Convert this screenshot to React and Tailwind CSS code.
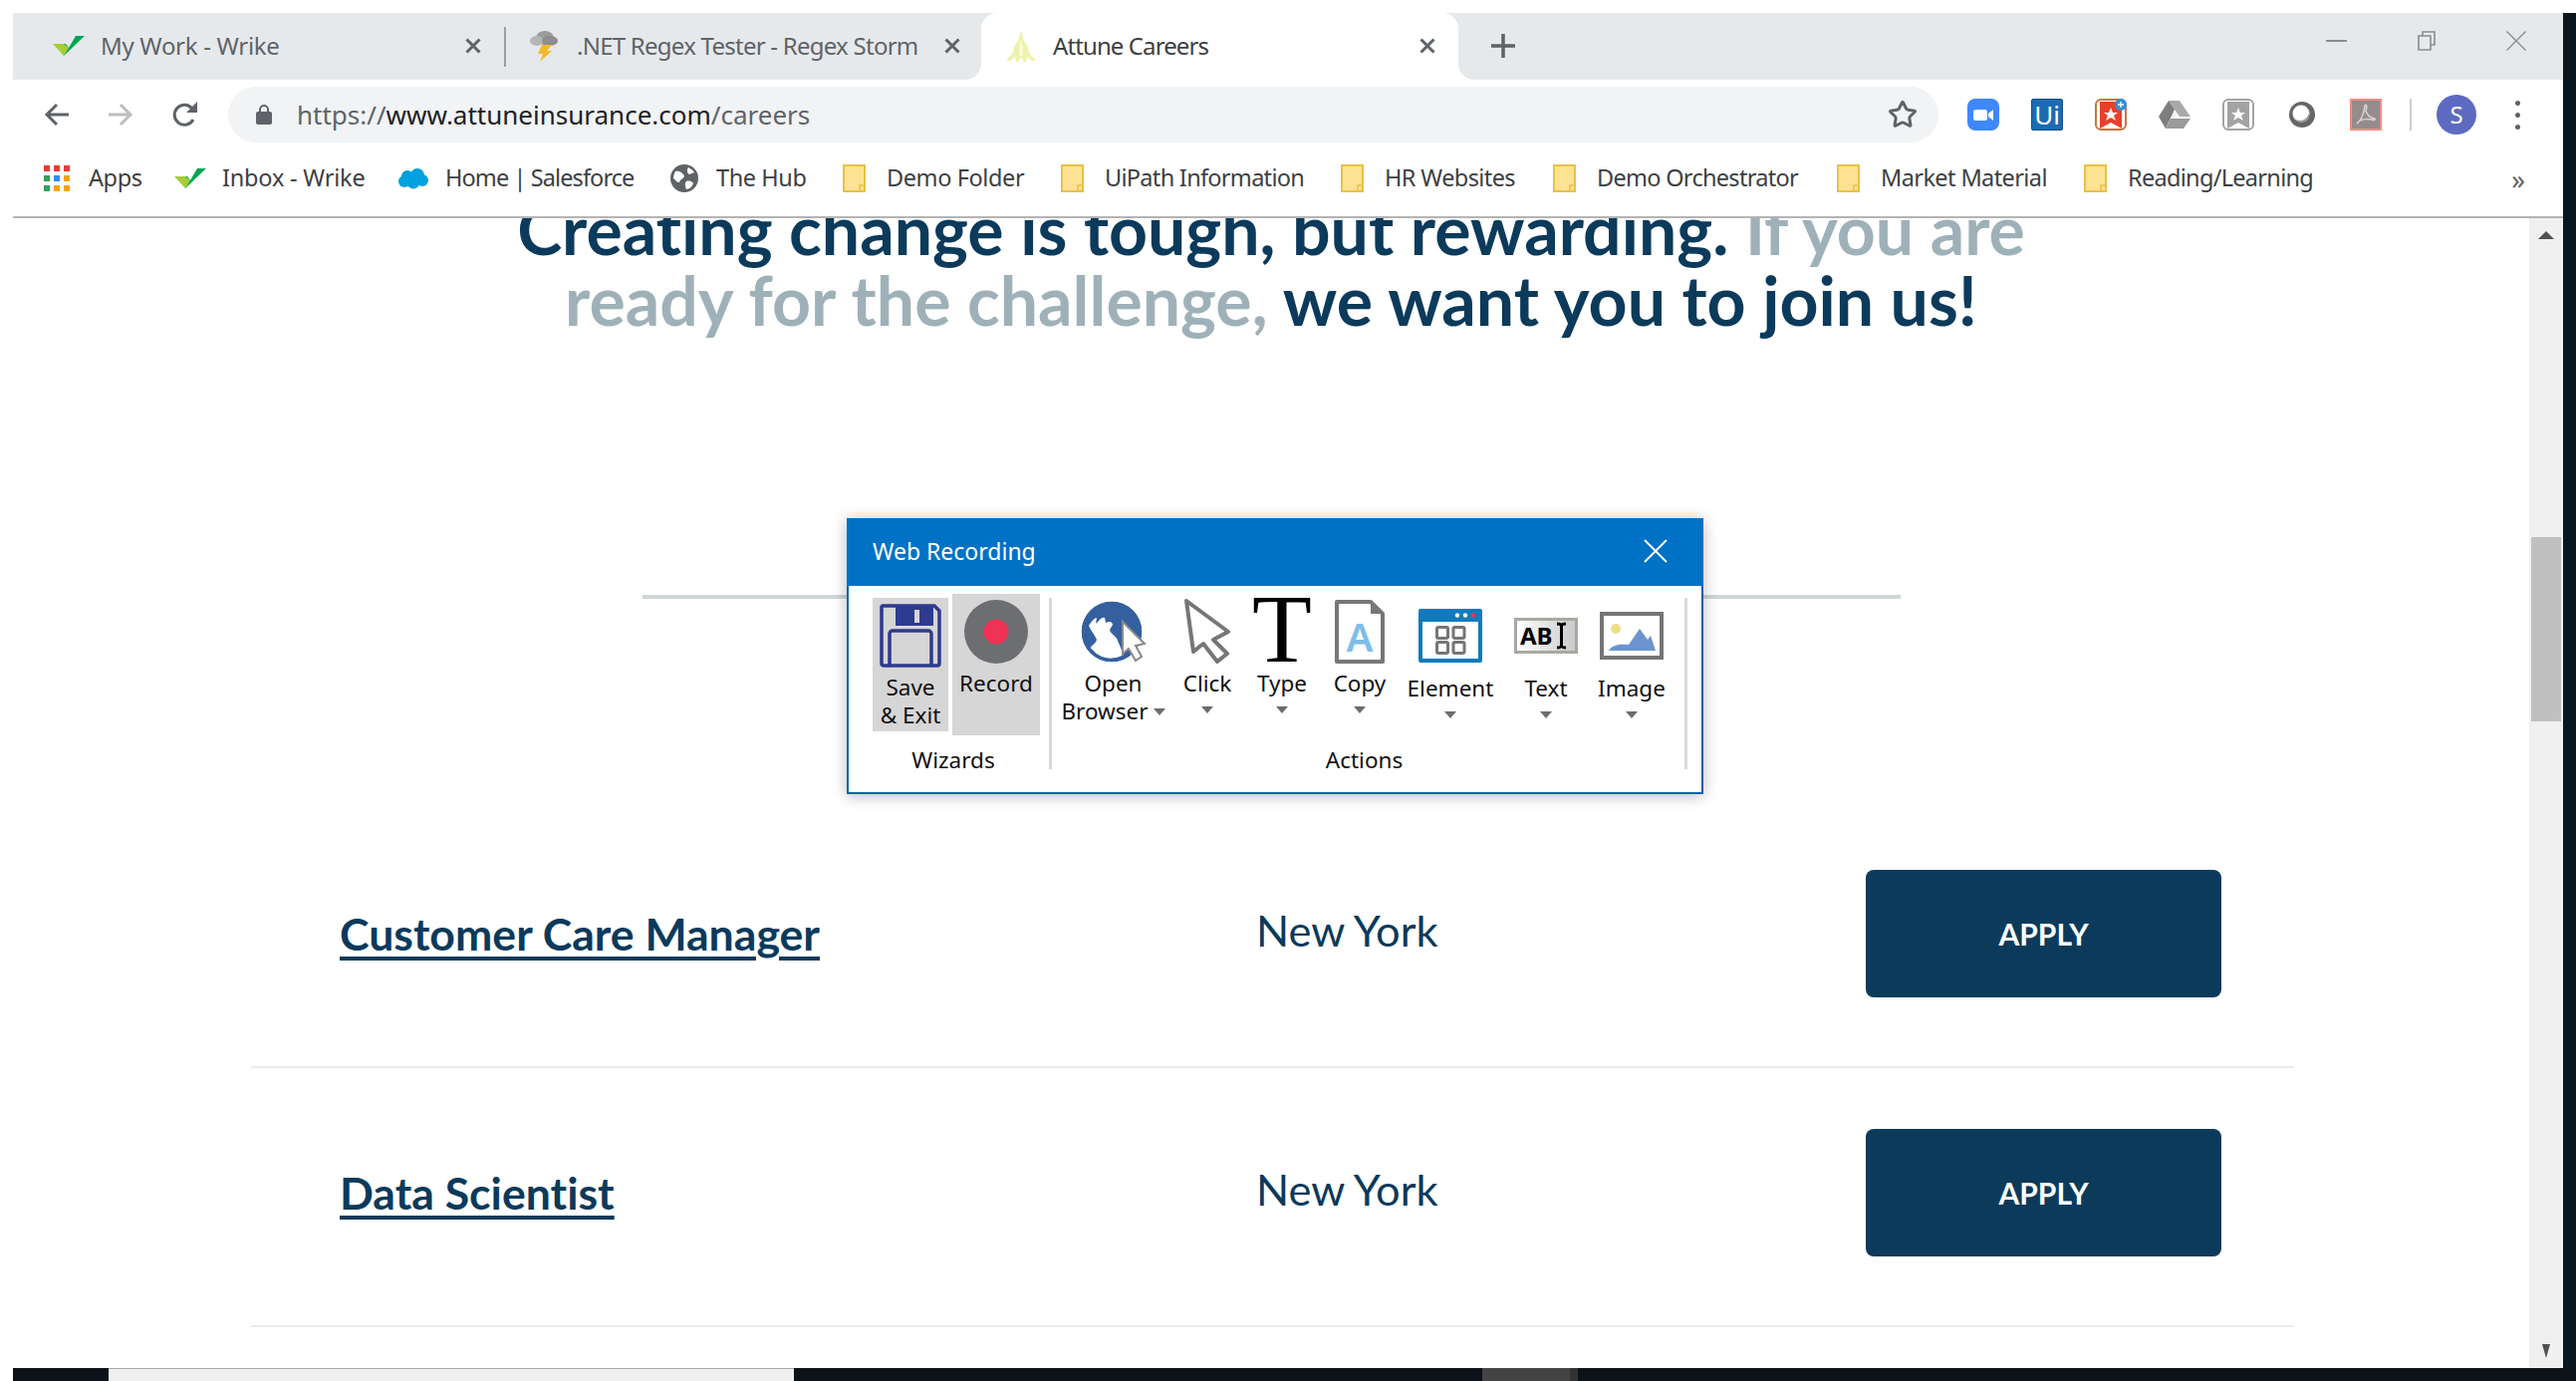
import { Star } from "lucide-react";

// favicons and toolbar drawings
const WrikeCheck = () => (
  <svg width="32" height="20" viewBox="0 0 32 20">
    <path d="M11 20l-5 -12h7l3 4 7 -12h9z" fill="#00a651" />
    <path d="M0 8h11l5 4 -5 8z" fill="#a5cd39" />
  </svg>
);

const StormIcon = () => (
  <svg width="28" height="32" viewBox="0 0 28 32">
    <ellipse cx="15" cy="8" rx="9" ry="7" fill="#9a9a9a" />
    <ellipse cx="7" cy="11" rx="7" ry="5" fill="#b5b5b5" />
    <ellipse cx="20" cy="11" rx="8" ry="5" fill="#8d8d8d" />
    <path d="M12 15h10l-5 6h5l-12 11 3 -8h-5z" fill="#f5b928" />
  </svg>
);

const TreeIcon = () => (
  <svg width="30" height="32" viewBox="0 0 30 32">
    <path d="M15 0l3 11 4 6 1 6 7 8h-4l-5 -4 -1 5h-2l-3 -5 -3 5h-2l-1 -5 -5 4h-4l7 -8 1 -6 4 -6z" fill="#eef2ac" />
    <path d="M15 10l2 8v8h-4v-8z" fill="#f8fad8" />
  </svg>
);

const AppsIcon = () => {
  const colors = ["#ef3a32", "#ef3a32", "#ef3a32", "#34a05a", "#2f8cf0", "#f4a300", "#34a05a", "#f4a300", "#f4a300"];
  return (
    <div className="grid grid-cols-3 gap-[4px] w-[26px]">
      {colors.map((c, i) => (
        <div key={i} className="w-[6px] h-[6px]" style={{ backgroundColor: c }} />
      ))}
    </div>
  );
};

const CloudIcon = () => (
  <svg width="30" height="22" viewBox="0 0 30 22">
    <g fill="#00a1e0">
      <circle cx="9" cy="9" r="6" />
      <circle cx="19" cy="8" r="7" />
      <circle cx="24" cy="13" r="6" />
      <circle cx="6" cy="14" r="6" />
      <circle cx="15" cy="15" r="6.5" />
    </g>
  </svg>
);

const HubIcon = () => (
  <svg width="28" height="28" viewBox="0 0 28 28">
    <circle cx="14" cy="14" r="14" fill="#5f6368" />
    <path d="M5 7c4 -1 6 1 8 3s0 4 -2 5 -1 3 -3 3 -3 -3 -5 -4c0 -3 1 -5 2 -7zM18 3c2 1 5 3 6 5l-5 2c-2 -1 -3 -4 -1 -7zM16 17c3 -1 6 0 7 2 -1 3 -4 6 -7 6 -1 -3 -2 -6 0 -8z" fill="#fff" />
  </svg>
);

const FolderIcon = () => (
  <svg width="24" height="28" viewBox="0 0 24 28">
    <rect x="1" y="1" width="21" height="26" fill="#fde293" stroke="#e9c146" strokeWidth="2" />
    <path d="M17 27v-6h5" fill="none" stroke="#e9c146" strokeWidth="1.5" />
  </svg>
);

const LockIcon = () => (
  <svg width="16" height="20" viewBox="0 0 16 20">
    <rect y="7" width="16" height="13" rx="2" fill="#5f6368" />
    <path d="M4 8V5a4 4 0 0 1 8 0v3" fill="none" stroke="#5f6368" strokeWidth="2" />
  </svg>
);

const Arrow = ({ color, flip }) => (
  <svg width="26" height="24" viewBox="0 0 26 24" className={flip ? "-scale-x-100" : ""}>
    <path d="M25 12H3M13 2L3 12l10 10" fill="none" stroke={color} strokeWidth="3" />
  </svg>
);

const ReloadIcon = () => (
  <svg width="28" height="28" viewBox="0 0 28 28">
    <path d="M22 19a10 10 0 1 1 -1 -11" fill="none" stroke="#5f6368" strokeWidth="3" />
    <path d="M26 1v11h-11z" fill="#5f6368" />
  </svg>
);

const SmallX = ({ color = "#5f6368" }) => (
  <svg width="16" height="16" viewBox="0 0 16 16">
    <path d="M1.5 1.5l13 13M14.5 1.5l-13 13" stroke={color} strokeWidth="3" />
  </svg>
);

const ZoomExt = () => (
  <svg width="32" height="32" viewBox="0 0 32 32">
    <rect width="32" height="32" rx="8" fill="#3f88fb" />
    <rect x="6" y="11" width="14" height="11" rx="2.5" fill="#fff" />
    <path d="M21 15l5 -4v11l-5 -4z" fill="#fff" />
  </svg>
);

const UiExt = () => (
  <div className="w-[32px] h-[32px] rounded-[2px] bg-[#1c6bb0] border border-[#15508a] flex items-center justify-center text-white text-[26px] leading-none">
    Ui
  </div>
);

const RibbonExt = ({ body, edge, badge }) => (
  <svg width="32" height="32" viewBox="0 0 32 32">
    <rect x="1" y="1" width="30" height="30" rx="5" fill="#fff" stroke={edge} strokeWidth="2" />
    <path d="M5 3h22v27l-11 -6 -11 6z" fill={body} />
    <path d="M16 9l2 5h5l-4 3 2 5 -5 -3 -5 3 2 -5 -4 -3h5z" fill="#fff" />
    {badge && <circle cx="26" cy="6" r="6" fill="#2f8fdc" />}
    {badge && <path d="M26 3v6M23 6h6" stroke="#fff" strokeWidth="1.3" />}
  </svg>
);

const DriveExt = () => (
  <svg width="32" height="28" viewBox="0 0 32 28">
    <path d="M10 0h11l11 16h-11l-5 -7z" fill="#a9a9a9" />
    <path d="M10 0l6 9 -9 19 -7 -12z" fill="#7d7d7d" />
    <path d="M12 18h20l-7 10h-18z" fill="#9b9b9b" />
    <path d="M16 10l4 8h-8z" fill="#f2f2f2" />
  </svg>
);

const CircleExt = () => (
  <svg width="28" height="28" viewBox="0 0 28 28">
    <circle cx="14" cy="14" r="13" fill="#666666" />
    <circle cx="13" cy="13" r="8.500" fill="#fff" />
    <path d="M6 18c3 4 9 5 13 2 2 -2 3 -5 2 -8 -1 5 -5 8 -9 8 -2 0 -4 -1 -6 -2z" fill="#9c9c9c" />
  </svg>
);

const PdfExt = () => (
  <svg width="32" height="32" viewBox="0 0 32 32">
    <rect x="1" y="1" width="30" height="30" fill="#948c8c" stroke="#f28b82" strokeWidth="2" />
    <path d="M7 25c4 -3 7 -9 8 -18 1 -2 3 0 1 5 1 4 4 7 9 8 1 1 -1 2 -3 1 -5 -1 -10 0 -12 1" fill="none" stroke="#d8d3d3" strokeWidth="1.6" />
  </svg>
);

const FloppyIcon = () => (
  <svg width="62" height="64" viewBox="0 0 62 64">
    <path d="M3 2h52l5 5v53a2 2 0 0 1 -2 2H4a2 2 0 0 1 -2 -2V3z" fill="none" stroke="#2e3a8f" strokeWidth="3.5" />
    <path d="M16 2h38v20H16z" fill="#2e3a8f" />
    <rect x="35" y="6" width="5" height="13" fill="#d6d6d6" />
    <path d="M10 62V30a3 3 0 0 1 3 -3h36a3 3 0 0 1 3 3v32" fill="none" stroke="#2e3a8f" strokeWidth="3.5" />
  </svg>
);

const RecordIcon = () => (
  <svg width="64" height="64" viewBox="0 0 64 64">
    <circle cx="32" cy="32" r="32" fill="#6d6e71" />
    <circle cx="32" cy="32" r="12.5" fill="#ef3354" />
  </svg>
);

const GlobeIcon = () => (
  <svg width="66" height="64" viewBox="0 0 66 64">
    <circle cx="31" cy="32" r="30" fill="#34609f" />
    <path d="M8 26c3 -5 6 -8 8 -8l-1 6c3 -2 5 -7 9 -6l1 5c3 -1 6 -2 7 2l-3 5c1 5 7 6 8 11l6 14c-8 5 -22 6 -31 0 4 -1 1 -5 -3 -6 1 -3 6 -5 7 -9 -2 -5 -6 -9 -8 -14z" fill="#fff" />
    <circle cx="31" cy="32" r="28.5" fill="none" stroke="#34609f" strokeWidth="3.5" />
    <path d="M42 22l22 22 -9 2 6 11 -6 4 -7 -12 -6 5z" fill="#fff" stroke="#8a8a8a" strokeWidth="2" />
  </svg>
);

const CursorIcon = () => (
  <svg width="46" height="66" viewBox="0 0 46 66">
    <path d="M2 3l42 31 -15 8 14 14 -10 8 -14 -18 -10 8z" fill="#fff" stroke="#767676" strokeWidth="4" strokeLinejoin="round" />
  </svg>
);

const TypeIcon = () => (
  <div className="w-[62px] h-[70px] text-center text-[98px] leading-[70px] text-black font-['Liberation_Serif',serif]">T</div>
);

const CopyIcon = () => (
  <svg width="50" height="64" viewBox="0 0 50 64">
    <path d="M2 2h34l12 12v48H2z" fill="#fff" stroke="#777" strokeWidth="4" strokeLinejoin="round" />
    <path d="M36 2v12h12z" fill="#777" />
    <text x="25" y="52" textAnchor="middle" fontSize="40" fontWeight="600" fontFamily="'Noto Sans', sans-serif" fill="#80bde8">A</text>
  </svg>
);

const ElementIcon = () => (
  <svg width="64" height="54" viewBox="0 0 64 54">
    <rect width="64" height="54" rx="2" fill="#0f7bbd" />
    <rect x="4" y="13" width="56" height="37" fill="#fff" />
    <circle cx="39" cy="6.5" r="2.2" fill="#fff" />
    <circle cx="47" cy="6.5" r="2.2" fill="#fff" />
    <circle cx="55" cy="6.5" r="2.2" fill="#ef3354" />
    <g fill="none" stroke="#757575" strokeWidth="3">
      <rect x="18.5" y="18.5" width="11" height="11" rx="1.5" />
      <rect x="35" y="18.5" width="11" height="11" rx="1.5" />
      <rect x="18.5" y="33.5" width="11" height="11" rx="1.5" />
      <rect x="35" y="33.5" width="11" height="11" rx="1.5" />
    </g>
  </svg>
);

const TextIcon = () => (
  <svg width="64" height="36" viewBox="0 0 64 36">
    <defs>
      <linearGradient id="textFieldFill" x1="0" x2="1" y1="0" y2="0">
        <stop offset="0" stopColor="#ffffff" />
        <stop offset="1" stopColor="#c9c9c9" />
      </linearGradient>
    </defs>
    <rect x="1.5" y="1.5" width="61" height="33" fill="url(#textFieldFill)" stroke="#a8a8a2" strokeWidth="3" />
    <text x="6" y="27" fontSize="24" fontWeight="700" fontFamily="'Noto Sans', sans-serif" fill="#000">AB</text>
    <path d="M43 6c2 0 4 0 4.500 2 .5 -2 2.500 -2 4.500 -2M47.500 8v20M43 30c2 0 4 0 4.500 -2 .5 2 2.500 2 4.500 2" fill="none" stroke="#000" strokeWidth="3" />
  </svg>
);

const ImageIcon = () => (
  <svg width="64" height="48" viewBox="0 0 64 48">
    <rect x="2" y="2" width="60" height="44" fill="#fff" stroke="#757575" strokeWidth="4" />
    <circle cx="16" cy="17" r="5" fill="#efdc85" />
    <path d="M9 39c3 -6 12 -7 20 -6l11 -16 8 11 3 -4 5 15z" fill="#6b94cf" />
  </svg>
);

const Caret = () => (
  <svg width="12" height="7" viewBox="0 0 12 7" className="block">
    <path d="M0 0h12l-6 7z" fill="#6d6d6d" />
  </svg>
);

const Tool = ({ icon, label, width, iconBox, labelTop }) => (
  <div className={`flex flex-col items-center ${width}`}>
    <div className={`flex items-end justify-center ${iconBox}`}>{icon}</div>
    <div className={`text-[22.5px] leading-[28px] text-[#111] ${labelTop}`}>{label}</div>
    <div className="mt-[9px]"><Caret /></div>
  </div>
);

const tabs = [
  { title: "My Work - Wrike", icon: <WrikeCheck />, box: "w-[495px] pl-[40px]", text: "ml-[16px] w-[366px] tracking-[-0.3px]" },
  { title: ".NET Regex Tester - Regex Storm", icon: <StormIcon />, box: "w-[477px] pl-[22px]", text: "ml-[17px] w-[369px] tracking-[-0.75px]" },
];

const bookmarks = [
  { label: "Apps", icon: <AppsIcon />, w: "w-[53px] tracking-[-0.4px]" },
  { label: "Inbox - Wrike", icon: <WrikeCheck />, w: "w-[143px] tracking-[-0.2px]" },
  { label: "Home | Salesforce", icon: <CloudIcon />, w: "w-[191px] tracking-[-0.9px]" },
  { label: "The Hub", icon: <HubIcon />, w: "w-[90px] tracking-[-0.4px]" },
  { label: "Demo Folder", icon: <FolderIcon />, w: "w-[138px] tracking-[-0.4px]" },
  { label: "UiPath Information", icon: <FolderIcon />, w: "w-[200px] tracking-[-0.7px]" },
  { label: "HR Websites", icon: <FolderIcon />, w: "w-[132px] tracking-[-0.6px]" },
  { label: "Demo Orchestrator", icon: <FolderIcon />, w: "w-[204px] tracking-[-0.7px]" },
  { label: "Market Material", icon: <FolderIcon />, w: "w-[167px] tracking-[-0.6px]" },
  { label: "Reading/Learning", icon: <FolderIcon />, w: "w-[186px] tracking-[-0.7px]" },
];

const jobs = ["Customer Care Manager", "Data Scientist"];

const TabFlare = ({ side }) => (
  <div className={`absolute bottom-0 w-[16px] h-[16px] bg-white ${side === "left" ? "-left-[16px]" : "-right-[16px]"}`}>
    <div className={`w-full h-full bg-[#e6e9ec] ${side === "left" ? "rounded-br-[16px]" : "rounded-bl-[16px]"}`} />
  </div>
);

const WebRecording = () => (
  <div className="absolute left-[850px] top-[520px] w-[860px] h-[277px] bg-white border-2 border-t-0 border-[#0a62ad] shadow-[0_2px_14px_rgba(0,0,0,0.28)]">
    <div className="h-[68px] bg-[#0072c6] -mx-[2px] pl-[26px] pr-[36px] pb-[2px] flex items-center justify-between text-white text-[23px]">
      <span>Web Recording</span>
      <svg width="24" height="24" viewBox="0 0 24 24">
        <path d="M1 1l22 22M23 1L1 23" stroke="#fff" strokeWidth="1.8" />
      </svg>
    </div>
    <div className="flex pt-[8px] pl-[24px]">
      <div className="w-[168px] flex flex-col items-center">
        <div className="h-[142px] w-full flex gap-[4px] items-start">
          <div className="mt-[4px] w-[76px] h-[134px] bg-[#d6d6d6] flex flex-col items-center pt-[6px] text-[22.5px] leading-[28px] text-[#111]">
            <FloppyIcon />
            <div className="mt-[6px] text-center">Save<br />&amp; Exit</div>
          </div>
          <div className="w-[88px] h-[142px] bg-[#d6d6d6] flex flex-col items-center pt-[6px] text-[22.5px] leading-[28px] text-[#111]">
            <RecordIcon />
            <div className="mt-[6px]">Record</div>
          </div>
        </div>
        <div className="mt-[11px] mr-[6px] text-[22.5px] leading-[28px] text-[#111]">Wizards</div>
      </div>
      <div className="w-[3px] h-[172px] mt-[4px] ml-[9px] bg-[#d9d9d9]" />
      <div className="w-[627px] flex flex-col">
        <div className="h-[142px] flex items-start">
          <div className="w-[123px] flex flex-col items-center">
            <div className="h-[70px] flex items-end"><GlobeIcon /></div>
            <div className="mt-[6px] text-[22.5px] leading-[28px] text-[#111] text-center">
              Open
              <div className="flex items-center gap-[5px]">Browser<Caret /></div>
            </div>
          </div>
          <Tool icon={<CursorIcon />} label="Click" width="w-[66px]" iconBox="h-[70px]" labelTop="mt-[6px]" />
          <Tool icon={<TypeIcon />} label="Type" width="w-[84px]" iconBox="h-[70px]" labelTop="mt-[6px]" />
          <Tool icon={<CopyIcon />} label="Copy" width="w-[72px]" iconBox="h-[70px]" labelTop="mt-[6px]" />
          <Tool icon={<ElementIcon />} label="Element" width="w-[110px]" iconBox="h-[69px]" labelTop="mt-[12px]" />
          <Tool icon={<TextIcon />} label="Text" width="w-[82px]" iconBox="h-[60px]" labelTop="mt-[21px]" />
          <Tool icon={<ImageIcon />} label="Image" width="w-[90px]" iconBox="h-[66px]" labelTop="mt-[15px]" />
        </div>
        <div className="mt-[11px] text-[22.5px] leading-[28px] text-[#111] text-center">Actions</div>
      </div>
      <div className="w-[3px] h-[172px] mt-[4px] ml-[8px] bg-[#d9d9d9]" />
    </div>
  </div>
);

export default function App() {
  return (
    <div className="relative w-[2586px] h-[1386px] overflow-hidden bg-white pt-[13px] flex flex-col font-['Noto_Sans',sans-serif]">
      <div className="flex-1 min-h-0 flex pl-[13px]">
        <div className="w-[2560px] flex flex-col">
          {/* tab strip */}
          <div className="h-[67px] flex-none bg-[#e6e9ec] flex items-stretch">
            {tabs.map((t, i) => (
              <div key={t.title} className={`relative flex items-center pb-[2px] ${t.box}`}>
                <div className="w-[32px] flex justify-center">{t.icon}</div>
                <div className={`text-[24px] leading-none text-[#5f6368] whitespace-nowrap ${t.text}`}>{t.title}</div>
                <SmallX />
                {i === 0 && <div className="absolute right-0 top-[14px] h-[40px] w-[2px] bg-[#9aa0a6]" />}
              </div>
            ))}
            <div className="relative w-[479px] bg-white rounded-t-[16px] flex items-center pl-[25px] pb-[2px]">
              <TabFlare side="left" />
              <TabFlare side="right" />
              <TreeIcon />
              <div className="ml-[17px] w-[368px] text-[24px] leading-none text-[#3c4043] tracking-[-0.9px]">Attune Careers</div>
              <SmallX />
            </div>
            <div className="ml-[33px] flex items-center pb-[2px]">
              <svg width="24" height="24" viewBox="0 0 24 24">
                <path d="M12 0v24M0 12h24" stroke="#5f6368" strokeWidth="3.5" />
              </svg>
            </div>
            <div className="ml-auto flex items-start pt-[18px] gap-[71px] pr-[37px] h-full">
              <div className="w-[21px] h-[2px] bg-[#8a8d90] mt-[9px]" />
              <svg width="18" height="20" viewBox="0 0 18 20">
                <path d="M1 5h12v14H1zM5 5V1h12v13h-4" fill="none" stroke="#8a8d90" strokeWidth="1.6" />
              </svg>
              <svg width="20" height="20" viewBox="0 0 20 20">
                <path d="M0.500 0.500l19 19M19.500 0.500l-19 19" stroke="#8a8d90" strokeWidth="1.4" />
              </svg>
            </div>
          </div>

          {/* toolbar */}
          <div className="h-[70px] flex-none flex items-center">
            <div className="w-[216px] flex-none flex items-center pl-[31px] gap-[38px]">
              <Arrow color="#5f6368" />
              <Arrow color="#bdbdbd" flip />
              <ReloadIcon />
            </div>
            <div className="w-[1717px] h-[56px] flex-none rounded-full bg-[#f1f3f4] flex items-center pl-[28px] pr-[21px]">
              <LockIcon />
              <div className="ml-[25px] text-[26px] leading-none whitespace-nowrap text-[#5f6368]">
                https://<span className="text-[#202124]">www.attuneinsurance.com</span>/careers
              </div>
              <Star className="ml-auto" size={30} strokeWidth={2.4} color="#5f6368" />
            </div>
            <div className="flex items-center ml-[13px]">
              <div className="w-[64px] flex justify-center"><ZoomExt /></div>
              <div className="w-[64px] flex justify-center"><UiExt /></div>
              <div className="w-[64px] flex justify-center"><RibbonExt body="#e8402a" edge="#c9773f" badge /></div>
              <div className="w-[64px] flex justify-center"><DriveExt /></div>
              <div className="w-[64px] flex justify-center"><RibbonExt body="#a3a3a3" edge="#a3a3a3" /></div>
              <div className="w-[64px] flex justify-center"><CircleExt /></div>
              <div className="w-[64px] flex justify-center"><PdfExt /></div>
              <div className="w-[2px] h-[32px] bg-[#cfcfcf] ml-[12px]" />
              <div className="ml-[25px] w-[40px] h-[40px] rounded-full bg-[#5c6bc0] text-white text-[24px] flex items-center justify-center">S</div>
              <div className="ml-[39px] flex flex-col gap-[7px]">
                <div className="w-[5px] h-[5px] rounded-full bg-[#5f6368]" />
                <div className="w-[5px] h-[5px] rounded-full bg-[#5f6368]" />
                <div className="w-[5px] h-[5px] rounded-full bg-[#5f6368]" />
              </div>
            </div>
          </div>

          {/* bookmarks */}
          <div className="h-[69px] flex-none border-b-2 border-[#b4b4b4] flex items-center pl-[28px] pb-[9px] gap-[33px]">
            {bookmarks.map((b) => (
              <div key={b.label} className="flex items-center gap-[16px]">
                <div className="w-[32px] flex justify-center">{b.icon}</div>
                <div className={`text-[23.5px] leading-none text-[#3c4043] whitespace-nowrap ${b.w}`}>{b.label}</div>
              </div>
            ))}
            <div className="ml-auto mr-[38px] text-[27px] leading-none text-[#5f6368]">»</div>
          </div>

          {/* page */}
          <div className="flex-1 min-h-0 flex">
            <div className="flex-1 min-w-0 overflow-hidden font-['Lato',sans-serif] [font-variant-ligatures:none]">
              <h1 className="-mt-[25px] text-center text-[68px] leading-[71px] font-bold text-[#0b3a5b]">
                Creating change is tough, but rewarding. <span className="text-[#9fb1b8]">If you are</span>
                <br />
                <span className="text-[#9fb1b8]">ready for the challenge,</span> we want you to join us!
              </h1>
              <div className="mt-[261px] mx-auto w-[1263px] h-[4px] bg-[#cfd6d8]" />
              <div className="mt-[211px] ml-[239px] w-[2051px]">
                {jobs.map((job) => (
                  <div key={job} className="h-[260px] border-b-2 border-[#eeeaea] flex items-center pb-[8px]">
                    <a className="w-[1009px] pl-[89px] text-[44.6px] font-bold text-[#0b3a5b] underline decoration-[4px] underline-offset-[6px]">{job}</a>
                    <div className="flex-1 text-[43.4px] text-[#0b3a5b] pb-[6px]">New York</div>
                    <div className="w-[357px] h-[128px] mr-[73px] rounded-[8px] bg-[#0b3a5b] flex items-center justify-center text-white text-[30px] font-bold">APPLY</div>
                  </div>
                ))}
              </div>
            </div>
            {/* scrollbar */}
            <div className="w-[34px] flex-none bg-[#f0f0f0] flex flex-col items-center">
              <svg width="16" height="8" viewBox="0 0 16 8" className="mt-[13px]"><path d="M8 0l8 8H0z" fill="#505050" /></svg>
              <div className="mt-[299px] w-[30px] h-[185px] bg-[#c0c0c0]" />
              <svg width="8" height="14" viewBox="0 0 8 14" className="mt-auto mb-[10px]"><path d="M0 0h8l-4 14z" fill="#505050" /></svg>
            </div>
          </div>
        </div>
        <div className="w-[13px] flex-none bg-[#0b1520]" />
      </div>

      {/* taskbar */}
      <div className="h-[13px] flex-none ml-[13px] bg-[#0c1218] flex">
        <div className="ml-[96px] w-[688px] bg-[#f0f0f0] border-t border-[#aaaaaa]" />
        <div className="ml-[691px] w-[88px] bg-[#444444]" />
        <div className="w-[8px] bg-[#333333]" />
      </div>

      <WebRecording />
    </div>
  );
}
